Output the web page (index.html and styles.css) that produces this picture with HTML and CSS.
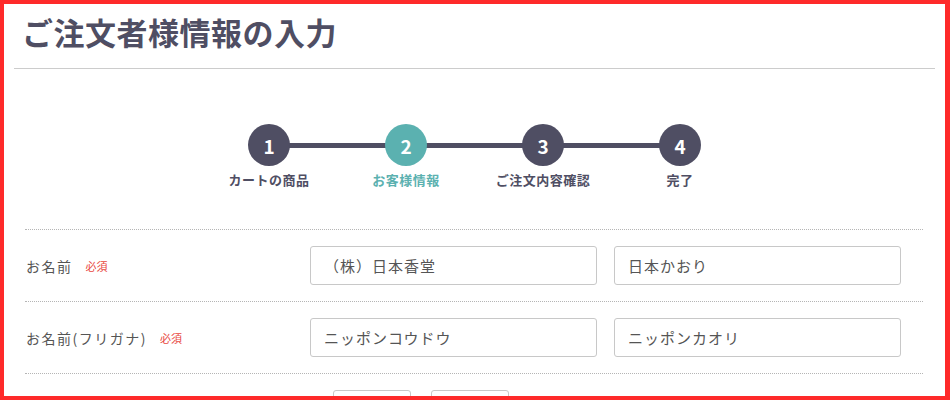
FILE: index.html
```html
<!DOCTYPE html>
<html lang="ja">
<head>
    <meta charset="UTF-8">
    <meta name="viewport" content="width=device-width, initial-scale=1.0">
    <title>ご注文者様情報の入力</title>
    <link rel="stylesheet" href="styles.css">
</head>
<body>
    <div id="frame">

        <div class="page-head">
            <h1>ご注文者様情報の入力</h1>
        </div>

        <ol class="steps">
            <li class="step">
                <span class="step-num">1</span>
                <span class="step-label">カートの商品</span>
            </li>
            <li class="step current">
                <span class="step-num">2</span>
                <span class="step-label">お客様情報</span>
            </li>
            <li class="step">
                <span class="step-num">3</span>
                <span class="step-label">ご注文内容確認</span>
            </li>
            <li class="step">
                <span class="step-num">4</span>
                <span class="step-label">完了</span>
            </li>
        </ol>

        <div class="form">
            <div class="form-row">
                <div class="form-label">
                    <label>お名前</label>
                    <span class="required">必須</span>
                </div>
                <div class="form-fields">
                    <input type="text" class="field" value="（株）日本香堂">
                    <input type="text" class="field" value="日本かおり">
                </div>
            </div>
            <div class="form-row">
                <div class="form-label">
                    <label>お名前(フリガナ)</label>
                    <span class="required">必須</span>
                </div>
                <div class="form-fields">
                    <input type="text" class="field" value="ニッポンコウドウ">
                    <input type="text" class="field" value="ニッポンカオリ">
                </div>
            </div>
            <!-- 郵便番号 (below the fold) -->
            <div class="form-row">
                <div class="form-label"></div>
                <div class="form-fields zip">
                    <input type="text" class="field small" value="">
                    <input type="text" class="field small" value="">
                </div>
            </div>
        </div>
    </div>
</body>
</html>
```

FILE: styles.css
```css
*{
    box-sizing: border-box;
}
body{
    margin: 0;
    background: #fff;
    font-family: "Noto Sans CJK JP", "Noto Sans", sans-serif;
    color: #4f4e63;
}
#frame{
    width: 950px;
    height: 400px;
    border: 4px solid #fe2a2a;
    border-right-width: 5px;
    overflow: hidden;
    padding: 0 10px;
}

.page-head{
    padding: 6px 0 14px 8px;
    border-bottom: 1px solid #cccccc;
}
.page-head h1{
    margin: 0;
    font-size: 31px;
    line-height: 44px;
    font-weight: 700;
    letter-spacing: .5px;
    color: #4f4e63;
}

.steps{
    list-style: none;
    margin: 55px 0 0;
    padding: 0;
    display: flex;
    justify-content: center;
    position: relative;
}
.steps::before{
    content: "";
    position: absolute;
    left: 50%;
    margin-left: -206px;
    width: 412px;
    top: 19px;
    height: 5px;
    background: #4f4e63;
}
.step{
    width: 137px;
    display: flex;
    flex-direction: column;
    align-items: center;
    position: relative;
}
.step-num{
    width: 42px;
    height: 42px;
    border-radius: 50%;
    background: #4f4e63;
    color: #fff;
    font-size: 19px;
    font-weight: 700;
    display: flex;
    align-items: center;
    justify-content: center;
}
.step-label{
    margin-top: 5px;
    font-size: 13px;
    line-height: 18px;
    font-weight: 700;
    letter-spacing: .5px;
}
.step.current .step-num{
    background: #5bb1b0;
}
.step.current .step-label{
    color: #5bb1b0;
}

.form{
    margin: 40px 12px 0 11px;
    border-top: 1px dotted #b5b5b5;
}
.form-row{
    display: flex;
    align-items: center;
    padding: 16px 0;
    border-bottom: 1px dotted #b5b5b5;
}
.form-label{
    width: 285px;
    padding-left: 1px;
    display: flex;
    align-items: center;
    font-size: 14px;
    color: #555;
    letter-spacing: 1.5px;
}
.required{
    margin-left: 13px;
    font-size: 11px;
    color: #e8483e;
    letter-spacing: 0;
}
.form-fields{
    display: flex;
    gap: 17px;
}
.field{
    width: 287px;
    height: 39px;
    border: 1px solid #c8c8c8;
    border-radius: 3px;
    padding: 0 13px;
    font-family: inherit;
    font-size: 15px;
    letter-spacing: 1px;
    color: #555;
    background: #fff;
}
.form-fields.zip{
    gap: 20px;
    padding-left: 23px;
}
.field.small{
    width: 78px;
}
```
